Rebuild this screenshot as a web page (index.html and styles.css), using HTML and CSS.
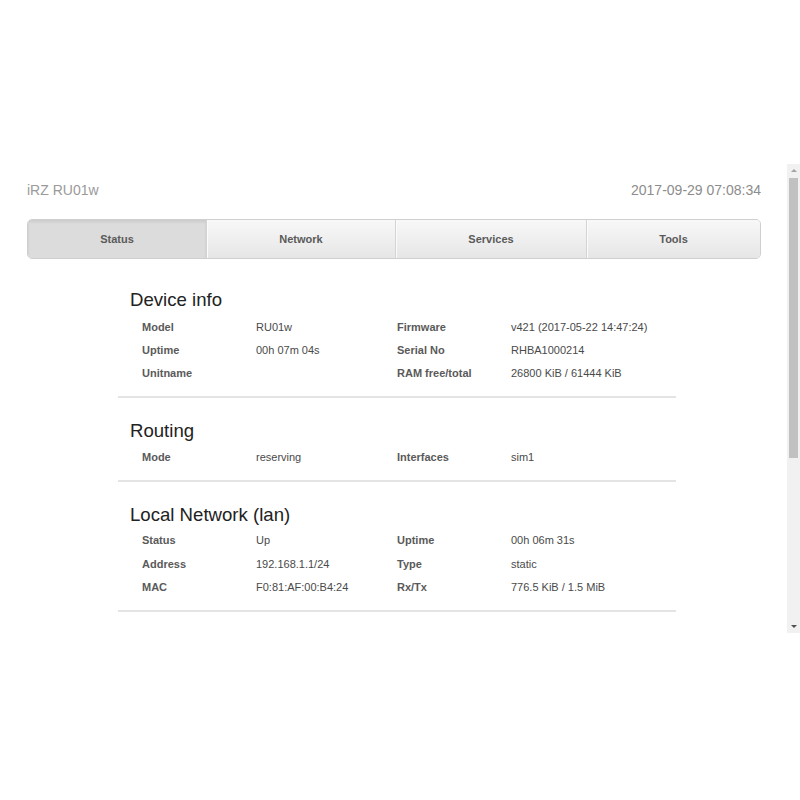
FILE: index.html
```html
<!DOCTYPE html>
<html lang="en">

<head>
    <meta charset="UTF-8">
    <meta name="viewport" content="width=device-width, initial-scale=1.0">
    <link rel="stylesheet" href="styles.css">

    <title>iRZ RU01w</title>
</head>

<body>
    <div class="frame">
        <div class="viewport">
            <div class="page">
                <header class="top">
                    <span class="device">iRZ RU01w</span>
                    <span class="clock">2017-09-29 07:08:34</span>
                </header>

                <ul class="tabs">
                    <li class="active">Status</li>
                    <li>Network</li>
                    <li>Services</li>
                    <li>Tools</li>
                </ul>

                <div class="content">
                    <section class="block">
                        <h3>Device info</h3>
                        <div class="info">
                            <span class="key">Model</span><span>RU01w</span>
                            <span class="key">Firmware</span><span>v421 (2017-05-22 14:47:24)</span>
                            <span class="key">Uptime</span><span>00h 07m 04s</span>
                            <span class="key">Serial No</span><span>RHBA1000214</span>
                            <span class="key">Unitname</span><span></span>
                            <span class="key">RAM free/total</span><span>26800 KiB / 61444 KiB</span>
                        </div>
                    </section>

                    <section class="block">
                        <h3>Routing</h3>
                        <div class="info">
                            <span class="key">Mode</span><span>reserving</span>
                            <span class="key">Interfaces</span><span>sim1</span>
                        </div>
                    </section>

                    <section class="block">
                        <h3>Local Network (lan)</h3>
                        <div class="info">
                            <span class="key">Status</span><span>Up</span>
                            <span class="key">Uptime</span><span>00h 06m 31s</span>
                            <span class="key">Address</span><span>192.168.1.1/24</span>
                            <span class="key">Type</span><span>static</span>
                            <span class="key">MAC</span><span>F0:81:AF:00:B4:24</span>
                            <span class="key">Rx/Tx</span><span>776.5 KiB / 1.5 MiB</span>
                        </div>
                    </section>
                </div>
            </div>
        </div>

        <div class="scrollbar">
            <div class="arrow up"></div>
            <div class="track">
                <div class="thumb"></div>
            </div>
            <div class="arrow down"></div>
        </div>
    </div>
</body>

</html>
```

FILE: styles.css
```css
* {
    margin: 0;
    padding: 0;
    box-sizing: border-box;
    font-family: "Liberation Sans", Arial, Helvetica, sans-serif;
}

body {
    background: #fff;
}

.frame {
    margin-top: 164px;
    height: 469px;
    display: flex;
}

.viewport {
    flex: 1;
    overflow: hidden;
}

/*--------scrollbar-------*/

.scrollbar {
    width: 13px;
    display: flex;
    flex-direction: column;
    background: #f1f1f1;
}

.arrow {
    height: 13px;
    display: flex;
    align-items: center;
    justify-content: center;
}

.arrow::before {
    content: "";
    width: 0;
    height: 0;
    border-left: 3px solid transparent;
    border-right: 3px solid transparent;
}

.arrow.up::before {
    border-bottom: 3px solid #a3a3a3;
}

.arrow.down::before {
    border-top: 3px solid #505050;
}

.track {
    flex: 1;
    padding: 1px 2px 0;
}

.thumb {
    height: 280px;
    background: #c1c1c1;
}

/*--------page-------*/

.page {
    padding: 17px 26px 0 27px;
}

.top {
    display: flex;
    justify-content: space-between;
    font-size: 14px;
    line-height: 18px;
}

.device {
    color: #9a9a9a;
}

.clock {
    color: #8c8c8c;
}

.tabs {
    margin-top: 20px;
    display: grid;
    grid-template-columns: 178px 189px 191px 1fr;
    height: 40px;
    list-style-type: none;
    border: 1px solid #cfcfcf;
    border-radius: 5px;
    overflow: hidden;
}

.tabs li {
    display: flex;
    align-items: center;
    justify-content: center;
    font-size: 11px;
    font-weight: 700;
    color: #5a5a5a;
    background: linear-gradient(#f8f8f8, #e6e6e6);
    border-left: 1px solid #d4d4d4;
    box-shadow: inset 1px 0 0 #fbfbfb;
    cursor: pointer;
}

.tabs li:first-child {
    border-left: none;
}

.tabs li.active {
    background: #dcdcdc;
    box-shadow: inset 0 2px 3px rgba(0, 0, 0, .08);
}

.content {
    margin: 9px 0 0 91px;
    width: 558px;
}

.block {
    padding: 21px 0 11px;
    border-bottom: 2px solid #e4e4e4;
}

.block + .block {
    padding-top: 22px;
}

.block h3 {
    padding-left: 12px;
    font-size: 18.6px;
    line-height: 22px;
    font-weight: 400;
    color: #222;
}

.info {
    margin-top: 4px;
    padding-left: 24px;
    display: grid;
    grid-template-columns: 114px 141px 114px 1fr;
    grid-auto-rows: 23.4px;
    align-items: center;
    font-size: 11px;
    color: #4a4a4a;
}

.block + .block .info {
    margin-top: 3px;
}

.info .key {
    font-weight: 700;
    color: #5a5a5a;
}
```
